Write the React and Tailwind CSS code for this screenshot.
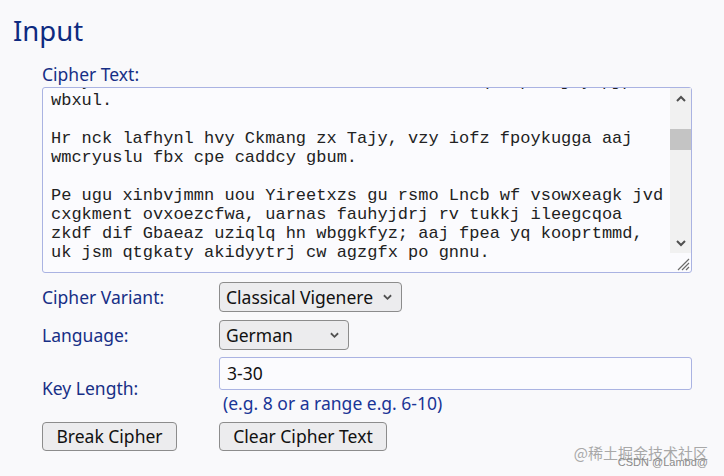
import React from "react";

const lines = [
  "Rtay hwlmkes ncfda obrstxk uvemlzh. rktwhaq eup foj yvpjp.",
  "wbxul.",
  "",
  "Hr nck lafhynl hvy Ckmang zx Tajy, vzy iofz fpoykugga aaj",
  "wmcryuslu fbx cpe caddcy gbum.",
  "",
  "Pe ugu xinbvjmmn uou Yireetxzs gu rsmo Lncb wf vsowxeagk jvd",
  "cxgkment ovxoezcfwa, uarnas fauhyjdrj rv tukkj ileegcqoa",
  "zkdf dif Gbaeaz uziqlq hn wbggkfyz; aaj fpea yq kooprtmmd,",
  "uk jsm qtgkaty akidyytrj cw agzgfx po gnnu.",
];

function Chevron({ up = false, className = "" }) {
  return (
    <svg width="10" height="7" viewBox="0 0 10 7" className={className}>
      <path
        d={up ? "M1 6 L5 2 L9 6" : "M1 1 L5 5 L9 1"}
        fill="none"
        stroke="#505050"
        strokeWidth="2"
      />
    </svg>
  );
}

export default function App() {
  return (
    <div className="relative w-[724px] h-[476px] overflow-hidden bg-[#f9f9fb] font-['Noto_Sans',sans-serif]">
      <h1 className="pl-[13px] pt-[12px] text-[27.5px] leading-[38px] text-[#0e2a80]">Input</h1>
      <div className="pl-[42px]">
        <div className="mt-[13px] text-[17.5px] leading-[22px] text-[#172f86]">Cipher Text:</div>
        <div className="mt-[2px] flex w-[650px] h-[186px] rounded-[3px] border border-[#aab3e2] bg-[#fbfbfe]">
          <div className="flex-1 overflow-hidden pl-[8px]">
            <div className="mt-[-16px] font-['Courier_New','Liberation_Mono',monospace] text-[17px] leading-[19px] text-[#222] whitespace-pre">
              {lines.map((l, i) => (
                <div key={i} className="h-[19px]">{l}</div>
              ))}
            </div>
          </div>
          <div className="flex w-[21px] flex-col">
            <div className="flex flex-1 flex-col bg-[#f1f1f1]">
              <div className="flex h-[20px] items-center justify-center">
                <Chevron up />
              </div>
              <div className="h-[21px]" />
              <div className="h-[21px] bg-[#c4c4c4]" />
              <div className="flex-1" />
              <div className="flex h-[20px] items-center justify-center">
                <Chevron />
              </div>
            </div>
            <div className="flex h-[19px] items-end justify-end pb-[1px] pr-[1px]">
              <svg width="15" height="15" viewBox="0 0 15 15">
                <path d="M14 3 L3 14 M14 7 L7 14 M14 11 L11 14" stroke="#6a6a6a" strokeWidth="1.2" />
              </svg>
            </div>
          </div>
        </div>

        <div className="mt-[9px] grid grid-cols-[177px_472px] items-center text-[17.5px] text-[#172f86]">
          <div>Cipher Variant:</div>
          <div className="flex h-[30px] w-[183px] items-center justify-between rounded-[4px] border border-[#8c8c8c] bg-[#ececee] pl-[6px] pr-[9px] text-[#111]">
            <span>Classical Vigenere</span>
            <Chevron className="w-[9px]" />
          </div>

          <div className="mt-[8px]">Language:</div>
          <div className="mt-[8px] flex h-[30px] w-[130px] items-center justify-between rounded-[4px] border border-[#8c8c8c] bg-[#ececee] pl-[6px] pr-[9px] text-[#111]">
            <span>German</span>
            <Chevron className="w-[9px]" />
          </div>

          <div className="mt-[7px] pt-[4px]">Key Length:</div>
          <div className="mt-[7px] flex flex-col">
            <div className="flex h-[33px] w-[473px] items-center rounded-[3px] border border-[#aab3e2] bg-[#fbfbfe] pl-[7px] text-[#111]">
              3-30
            </div>
            <div className="pl-[4px] leading-[26px] text-[#1a3596]">(e.g. 8 or a range e.g. 6-10)</div>
          </div>

          <div className="mt-[6px]">
            <div className="flex h-[29px] w-[135px] items-center justify-center rounded-[4px] border border-[#8c8c8c] bg-[#ececee] text-[#111]">
              Break Cipher
            </div>
          </div>
          <div className="mt-[6px]">
            <div className="flex h-[29px] w-[168px] items-center justify-center rounded-[4px] border border-[#8c8c8c] bg-[#ececee] text-[#111]">
              Clear Cipher Text
            </div>
          </div>
        </div>
      </div>

      <div className="absolute right-[16px] top-[443px] font-['Noto_Sans_CJK_SC',sans-serif] text-[15px] leading-[19px] text-[#a8a8a8]">
        @稀土掘金技术社区
      </div>
      <div className="absolute right-[16px] top-[455px] font-['Liberation_Sans',sans-serif] text-[11px] leading-[14px] text-[#8a8a8a]">
        CSDN @Lambd@
      </div>
    </div>
  );
}
